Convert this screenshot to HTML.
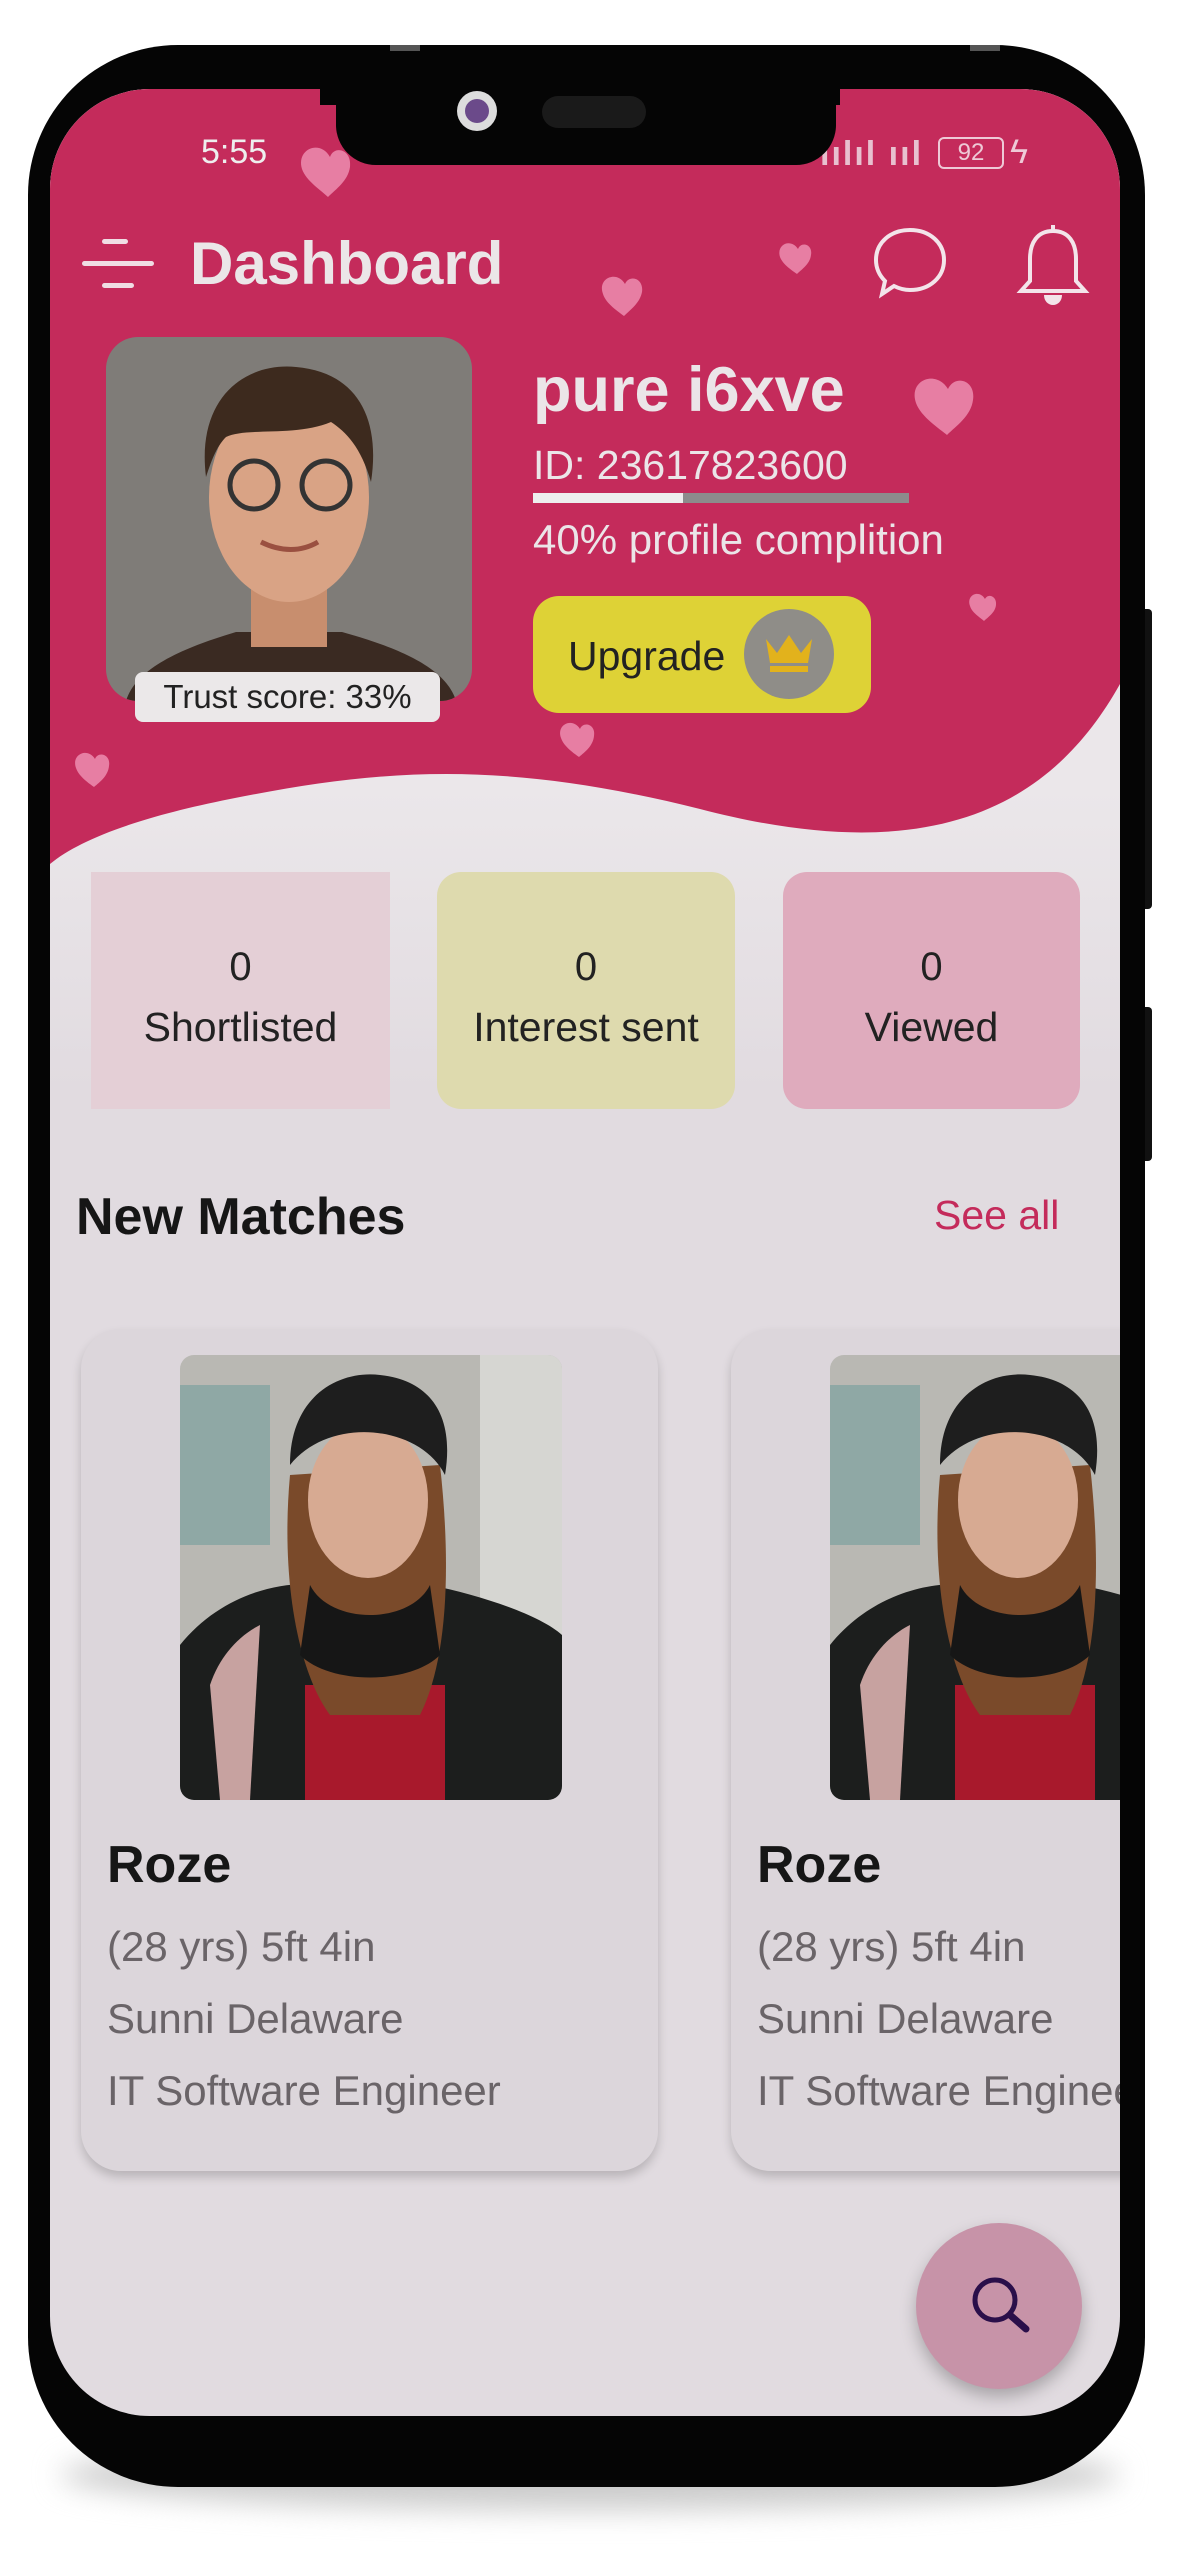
<!DOCTYPE html>
<html><head><meta charset="utf-8">
<style>
*{margin:0;padding:0;box-sizing:border-box}
body{width:1195px;height:2559px;background:#fff;position:relative;overflow:hidden;font-family:"Liberation Sans",sans-serif}
.a{position:absolute}
.t{position:absolute;white-space:nowrap;line-height:1}
</style></head><body>
<div class="a" style="left:60px;top:2440px;width:1060px;height:70px;border-radius:50%;background:#ccc;filter:blur(14px)"></div>
<div class="a" style="left:1138px;top:609px;width:14px;height:300px;background:#111;border-radius:4px"></div>
<div class="a" style="left:1138px;top:1007px;width:14px;height:154px;background:#111;border-radius:4px"></div>
<div class="a" style="left:28px;top:45px;width:1117px;height:2442px;background:#050505;border-radius:150px"></div>
<div class="a" style="left:390px;top:45px;width:30px;height:6px;background:#555"></div>
<div class="a" style="left:970px;top:45px;width:30px;height:6px;background:#555"></div>
<div class="a" style="left:50px;top:89px;width:1070px;height:2327px;border-radius:100px;overflow:hidden;background:#e1dbe0">
 <svg class="a" style="left:0;top:0" width="1070" height="1000">
  <defs><linearGradient id="bg" x1="0" y1="0" x2="0" y2="1"><stop offset="0.7" stop-color="#ebe7ea"/><stop offset="1" stop-color="#e1dbe0"/></linearGradient></defs>
  <rect width="1070" height="1000" fill="url(#bg)"/>
  <path d="M0,0 H1070 V595 C1000,720 880,780 650,720 C450,670 330,680 180,710 C90,728 30,750 0,775 Z" fill="#c42b5b"/>
  <g fill="#e77ea3">
   <path d="M265,70 c-10,-18 -34,-8 -28,12 c4,12 20,22 26,28 c8,-8 20,-16 22,-30 c2,-18 -16,-22 -20,-10z" transform="translate(15,-2)"/>
   <path d="M575,195 c-8,-14 -28,-6 -22,10 c3,10 16,18 21,22 c6,-6 16,-13 18,-24 c2,-14 -13,-18 -17,-8z"/>
   <path d="M748,160 c-7,-11 -22,-5 -18,8 c3,8 13,14 17,17 c5,-5 13,-10 14,-19 c2,-11 -10,-14 -13,-6z"/>
   <path d="M898,300 c-12,-20 -40,-9 -32,14 c5,14 24,26 31,32 c9,-9 24,-19 26,-35 c3,-20 -18,-26 -25,-11z"/>
   <path d="M935,510 c-6,-10 -19,-4 -15,7 c2,7 11,12 14,15 c4,-4 11,-8 12,-16 c1,-9 -8,-12 -11,-6z"/>
   <path d="M530,640 c-7,-12 -24,-5 -19,9 c3,9 14,16 18,19 c6,-5 14,-11 15,-21 c2,-12 -11,-15 -14,-7z"/>
   <path d="M45,670 c-7,-12 -24,-5 -19,9 c3,9 14,16 18,19 c6,-5 14,-11 15,-21 c2,-12 -11,-15 -14,-7z"/>
  </g>
 </svg>
 <div class="t" style="left:151px;top:46px;font-size:34px;color:#eee">5:55</div>
 <div class="t" style="left:770px;top:48px;font-size:34px;color:#e8c0cf;letter-spacing:2px;font-weight:bold">ıılıl ııl</div>
 <div class="a" style="left:888px;top:48px;width:66px;height:32px;border:2px solid #eec9d6;border-radius:6px;color:#eec9d6;font-size:24px;text-align:center;line-height:28px">92</div>
 <div class="t" style="left:960px;top:46px;font-size:34px;color:#eec9d6">ϟ</div>
 <div class="a" style="left:52px;top:150px;width:26px;height:5px;background:#f0dde4;border-radius:3px"></div>
 <div class="a" style="left:32px;top:172px;width:72px;height:5px;background:#f0dde4;border-radius:3px"></div>
 <div class="a" style="left:52px;top:194px;width:32px;height:5px;background:#f0dde4;border-radius:3px"></div>
 <div class="t" style="left:140px;top:145px;font-size:60px;font-weight:bold;color:#ebe6e8">Dashboard</div>
 <svg class="a" style="left:820px;top:133px" width="80" height="80" viewBox="0 0 80 80"><path d="M40,8 C60,8 74,21 74,38 C74,55 60,68 40,68 C33,68 28,66 24,64 L12,72 L15,59 C9,53 6,46 6,38 C6,21 20,8 40,8Z" fill="none" stroke="#f3e4ea" stroke-width="4"/></svg>
 <svg class="a" style="left:966px;top:130px" width="74" height="90" viewBox="0 0 74 90"><path d="M37,6 V12 M37,12 C21,12 14,24 14,40 V62 L5,72 H69 L60,62 V40 C60,24 53,12 37,12Z" fill="none" stroke="#f3e4ea" stroke-width="4"/><path d="M28,76 H46 C46,82 42,86 37,86 C32,86 28,82 28,76Z" fill="#f3e4ea"/></svg>
 <div class="a" style="left:56px;top:248px;width:366px;height:364px;border-radius:32px;overflow:hidden;background:#7f7c78">
  <svg width="366" height="364">
   <path d="M20,364 C30,330 80,310 130,295 L236,295 C290,310 340,330 350,364Z" fill="#3a2a22"/>
   <rect x="145" y="230" width="76" height="80" fill="#c88e6e"/>
   <ellipse cx="183" cy="160" rx="80" ry="105" fill="#d9a385"/>
   <path d="M100,140 C90,60 140,25 190,30 C250,35 275,80 265,145 C255,110 240,95 225,85 C190,100 140,90 120,100 C110,110 105,125 100,140Z" fill="#3d2a1e"/>
   <circle cx="148" cy="148" r="24" fill="none" stroke="#333" stroke-width="5"/>
   <circle cx="220" cy="148" r="24" fill="none" stroke="#333" stroke-width="5"/>
   <path d="M155,205 C175,215 195,215 212,205" stroke="#9a5040" stroke-width="5" fill="none"/>
  </svg>
 </div>
 <div class="a" style="left:85px;top:583px;width:305px;height:50px;background:#ebe8e9;border-radius:8px;font-size:33px;color:#222;text-align:center;line-height:50px">Trust score: 33%</div>
 <div class="t" style="left:483px;top:270px;font-size:63px;font-weight:bold;color:#ebe5e8">pure i6xve</div>
 <div class="t" style="left:483px;top:356px;font-size:41px;color:#ebe5e8">ID: 23617823600</div>
 <div class="a" style="left:483px;top:404px;width:376px;height:10px;background:#8c8c8c"></div>
 <div class="a" style="left:483px;top:404px;width:150px;height:10px;background:#eee"></div>
 <div class="t" style="left:483px;top:430px;font-size:42px;color:#ebe5e8">40% profile complition</div>
 <div class="a" style="left:483px;top:507px;width:338px;height:117px;border-radius:26px;background:#ded236"></div>
 <div class="t" style="left:518px;top:547px;font-size:41px;color:#222">Upgrade</div>
 <div class="a" style="left:694px;top:520px;width:90px;height:90px;border-radius:50%;background:#8f8d88"></div>
 <svg class="a" style="left:712px;top:542px" width="54" height="44" viewBox="0 0 54 44"><path d="M4,8 L15,22 L27,4 L39,22 L50,8 L46,32 H8Z" fill="#e2b21c"/><rect x="8" y="35" width="38" height="6" fill="#e2b21c"/></svg>
 <div class="a" style="left:41px;top:783px;width:299px;height:237px;background:#e4cfd6"></div>
 <div class="a" style="left:387px;top:783px;width:298px;height:237px;background:#dedaae;border-radius:24px"></div>
 <div class="a" style="left:733px;top:783px;width:297px;height:237px;background:#dfabbd;border-radius:24px"></div>
 <div class="t" style="left:41px;top:858px;width:299px;text-align:center;font-size:40px;color:#222">0</div>
 <div class="t" style="left:41px;top:918px;width:299px;text-align:center;font-size:41px;color:#222">Shortlisted</div>
 <div class="t" style="left:387px;top:858px;width:298px;text-align:center;font-size:40px;color:#222">0</div>
 <div class="t" style="left:387px;top:918px;width:298px;text-align:center;font-size:41px;color:#222">Interest sent</div>
 <div class="t" style="left:733px;top:858px;width:297px;text-align:center;font-size:40px;color:#222">0</div>
 <div class="t" style="left:733px;top:918px;width:297px;text-align:center;font-size:41px;color:#222">Viewed</div>
 <div class="t" style="left:26px;top:1102px;font-size:52px;font-weight:bold;color:#161616">New Matches</div>
 <div class="t" style="left:884px;top:1106px;font-size:41px;color:#c42b5b">See all</div>
 <div class="a" style="left:31px;top:1240px;width:577px;height:842px;border-radius:40px;background:#dcd6db;box-shadow:0 6px 10px rgba(0,0,0,.18)"></div>
 <div class="a" style="left:681px;top:1240px;width:577px;height:842px;border-radius:40px;background:#dcd6db;box-shadow:0 6px 10px rgba(0,0,0,.18)"></div>
 <svg class="a" style="left:130px;top:1266px" width="382" height="445"><defs><clipPath id="c1"><rect width="382" height="445" rx="14"/></clipPath></defs>
  <g clip-path="url(#c1)"><rect width="382" height="445" fill="#b9b8b3"/><rect x="0" y="30" width="90" height="160" fill="#8fa8a5"/><rect x="300" y="0" width="82" height="300" fill="#d6d6d2"/>
  <path d="M0,445 V290 C40,240 100,225 140,230 L250,230 C300,240 360,260 382,280 V445Z" fill="#1c1e1d"/>
  <path d="M30,330 C40,300 60,280 80,270 L70,445 H40Z" fill="#c7a2a0"/>
  <rect x="125" y="330" width="140" height="115" fill="#a8192c"/>
  <path d="M110,120 C100,230 120,320 150,360 L240,360 C270,300 270,200 260,110Z" fill="#7a4a2a"/>
  <ellipse cx="188" cy="145" rx="60" ry="78" fill="#d7aa92"/>
  <path d="M110,110 C110,40 160,15 200,20 C250,25 275,60 265,120 C240,70 150,60 110,110Z" fill="#1e1e1e"/>
  <path d="M130,230 C150,270 230,270 250,230 L260,300 C230,330 150,330 120,300Z" fill="#161616"/></g></svg>
 <svg class="a" style="left:780px;top:1266px" width="382" height="445"><defs><clipPath id="c2"><rect width="382" height="445" rx="14"/></clipPath></defs>
  <g clip-path="url(#c2)"><rect width="382" height="445" fill="#b9b8b3"/><rect x="0" y="30" width="90" height="160" fill="#8fa8a5"/>
  <path d="M0,445 V290 C40,240 100,225 140,230 L250,230 C300,240 360,260 382,280 V445Z" fill="#1c1e1d"/>
  <path d="M30,330 C40,300 60,280 80,270 L70,445 H40Z" fill="#c7a2a0"/>
  <rect x="125" y="330" width="140" height="115" fill="#a8192c"/>
  <path d="M110,120 C100,230 120,320 150,360 L240,360 C270,300 270,200 260,110Z" fill="#7a4a2a"/>
  <ellipse cx="188" cy="145" rx="60" ry="78" fill="#d7aa92"/>
  <path d="M110,110 C110,40 160,15 200,20 C250,25 275,60 265,120 C240,70 150,60 110,110Z" fill="#1e1e1e"/>
  <path d="M130,230 C150,270 230,270 250,230 L260,300 C230,330 150,330 120,300Z" fill="#161616"/></g></svg>
 <div class="t" style="left:57px;top:1750px;font-size:52px;font-weight:bold;color:#161616">Roze</div>
 <div class="t" style="left:57px;top:1837px;font-size:42px;color:#6a6468">(28 yrs) 5ft 4in</div>
 <div class="t" style="left:57px;top:1909px;font-size:42px;color:#6a6468">Sunni Delaware</div>
 <div class="t" style="left:57px;top:1981px;font-size:42px;color:#6a6468">IT Software Engineer</div>
 <div class="t" style="left:707px;top:1750px;font-size:52px;font-weight:bold;color:#161616">Roze</div>
 <div class="t" style="left:707px;top:1837px;font-size:42px;color:#6a6468">(28 yrs) 5ft 4in</div>
 <div class="t" style="left:707px;top:1909px;font-size:42px;color:#6a6468">Sunni Delaware</div>
 <div class="t" style="left:707px;top:1981px;font-size:42px;color:#6a6468">IT Software Engineer</div>
 <div class="a" style="left:866px;top:2134px;width:166px;height:166px;border-radius:50%;background:#c793a8;box-shadow:0 8px 16px rgba(0,0,0,.25)"></div>
 <svg class="a" style="left:912px;top:2178px" width="80" height="80" viewBox="0 0 80 80"><circle cx="33" cy="33" r="20" fill="none" stroke="#2a0f4a" stroke-width="5"/><path d="M48,48 L64,62" stroke="#2a0f4a" stroke-width="7" stroke-linecap="round"/></svg>
</div>
<div class="a" style="left:336px;top:85px;width:500px;height:80px;background:#050505;border-radius:0 0 40px 40px"></div>
<div class="a" style="left:320px;top:85px;width:520px;height:20px;background:#050505"></div>
<div class="a" style="left:457px;top:91px;width:40px;height:40px;border-radius:50%;background:#ddd"></div>
<div class="a" style="left:465px;top:99px;width:24px;height:24px;border-radius:50%;background:#6b4a8a"></div>
<div class="a" style="left:542px;top:96px;width:104px;height:32px;border-radius:16px;background:#1a1a1a"></div>
</body></html>
